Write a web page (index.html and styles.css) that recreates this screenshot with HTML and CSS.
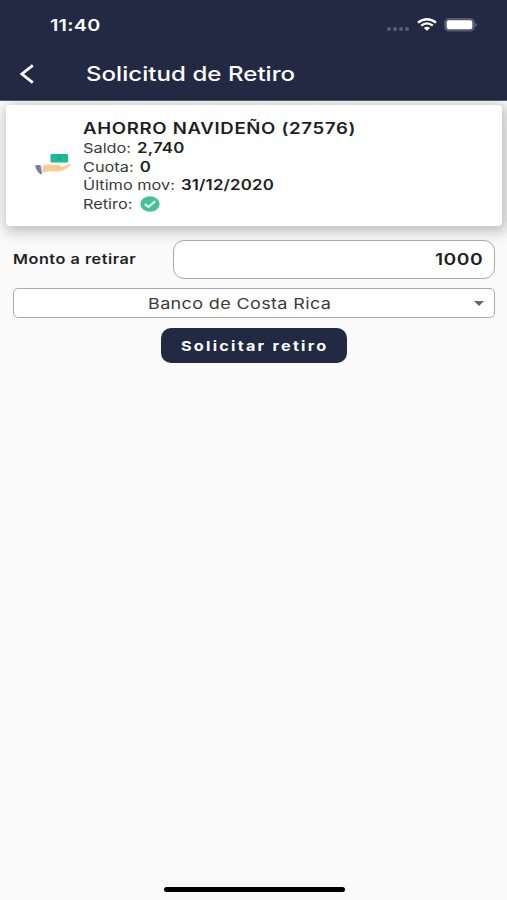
FILE: index.html
```html
<!DOCTYPE html>
<html lang="es">
<head>
    <meta charset="UTF-8">
    <meta name="viewport" content="width=device-width, initial-scale=1.0">
    <title>Solicitud de Retiro</title>
    <link rel="stylesheet" href="styles.css">
</head>
<body>
    <header class="header">
        <div class="status-bar">
            <span class="time wide">11:40</span>
            <div class="status-icons">
                <div class="signal"><i></i><i></i><i></i><i></i></div>
                <svg class="wifi" viewBox="0 0 20 14" preserveAspectRatio="none">
                    <path d="M1 5 Q10 -2.4 19 5" fill="none" stroke="#fff" stroke-width="2.5"/>
                    <path d="M4.2 8.3 Q10 3.4 15.8 8.3" fill="none" stroke="#fff" stroke-width="2.4"/>
                    <path d="M6.9 10.8 Q10 8 13.1 10.8 L10 13.7 Z" fill="#fff"/>
                </svg>
                <svg class="battery" viewBox="0 0 34 14">
                    <rect x=".7" y=".7" width="29.6" height="12.2" rx="4" fill="#545a70" stroke="#545a70" stroke-width="1.2"/>
                    <rect x="2.7" y="2.3" width="25.6" height="9" rx="2.2" fill="#fff"/>
                    <path d="M31.5 4.7 Q34 6.8 31.5 9 Z" fill="#7b7f90"/>
                </svg>
            </div>
        </div>
        <div class="nav-bar">
            <svg class="back" viewBox="0 0 16 20">
                <path d="M13.8 1.3 L2.9 10 L13.8 18.7" fill="none" stroke="#fff" stroke-width="2.8"/>
            </svg>
            <h1 class="wide">Solicitud de Retiro</h1>
        </div>
    </header>

    <main>
        <section class="card">
            <svg class="hand" viewBox="0 0 38 24">
                <rect x="15.5" y="1" width="17.5" height="8.6" rx=".8" fill="#1ebd98"/>
                <rect x="17.2" y="2.4" width="14.1" height="5.8" fill="none" stroke="#19ad8c" stroke-width=".6"/>
                <ellipse cx="24.3" cy="5.3" rx="2.2" ry="1.7" fill="#19a98a"/>
                <path d="M7.2 13.5 C11 11.2 14 11.1 17 11.7 L24.5 12 Q27 12.7 25 14 C29 14.3 32 11.2 35.5 10.7 Q36.7 11.3 34.8 13 C31 16.3 27 18.5 22.5 18.5 L15 18 Q11 18.4 8.3 19.8 Z" fill="#fbcb91"/>
                <path d="M15.5 14.2 Q20 15.4 25.3 14" fill="none" stroke="#f3bf86" stroke-width=".6"/>
                <path d="M0 12.3 L5.5 12 L7.2 20 L5.8 21.4 Q1.2 18.4 0 12.3 Z" fill="#77809a"/>
                <path d="M5.5 12.4 L7.3 12.6 L8.6 19.8 L7.2 20.4 Z" fill="#e3e7ee"/>
            </svg>
            <div class="card-info">
                <h2 class="wide">AHORRO NAVIDEÑO (27576)</h2>
                <p class="row wide">Saldo: <b>2,740</b></p>
                <p class="row wide">Cuota: <b>0</b></p>
                <p class="row wide">Último mov: <b>31/12/2020</b></p>
                <div class="row retiro">
                    <span class="wide">Retiro:</span>
                    <svg class="check" viewBox="0 0 20 16">
                        <ellipse cx="10" cy="8" rx="9.6" ry="7.8" fill="#40c497"/>
                        <path d="M4.9 8.1 L8.4 11 L15.2 5.2" fill="none" stroke="#fff" stroke-width="2.1"/>
                    </svg>
                </div>
            </div>
        </section>

        <form class="form">
            <div class="amount">
                <label class="wide">Monto a retirar</label>
                <div class="amount-box"><span class="wide">1000</span></div>
            </div>
            <div class="bank">
                <span class="wide">Banco de Costa Rica</span>
                <div class="arrow"></div>
            </div>
            <button type="button" class="submit"><span class="wide">Solicitar retiro</span></button>
        </form>
    </main>

    <div class="home-indicator"></div>
</body>
</html>
```
FILE: styles.css
```css
* {
    margin: 0;
    padding: 0;
    box-sizing: border-box;
    font-family: Inter, 'Liberation Sans', sans-serif;
}

body {
    height: 900px;
    display: flex;
    flex-direction: column;
    background: #fafafa;
    color: #1f1f1f;
    overflow: hidden;
}

/* stretched lettering */
.wide {
    display: block;
    width: max-content;
    white-space: nowrap;
    transform: scaleX(1.2);
    transform-origin: left center;
}

.header {
    height: 101px;
    background: #222943;
    color: #fff;
    border-bottom: 1px solid #615b70;
}

.status-bar {
    height: 48px;
    padding: 1px 29px 0 50px;
    display: flex;
    justify-content: space-between;
    align-items: center;
}

.time {
    font-size: 16.5px;
    font-weight: 600;
    letter-spacing: 0.2px;
}

.status-icons {
    display: flex;
    align-items: center;
}

.signal {
    display: flex;
    gap: 2px;
    margin: 9px 8px 0 0;
}

.signal i {
    width: 4px;
    height: 4px;
    border-radius: 50%;
    background: #5a5f75;
}

.wifi {
    width: 20px;
    height: 13px;
    margin-right: 7px;
}

.battery {
    width: 34px;
    height: 14px;
}

.nav-bar {
    height: 52px;
    padding-left: 19px;
    display: flex;
    align-items: center;
}

.back {
    width: 16px;
    height: 20px;
    margin-right: 51px;
}

h1 {
    font-size: 20px;
    font-weight: 500;
    letter-spacing: 0.05px;
}

.card {
    height: 121px;
    margin: 4px 5px 0 6px;
    padding: 14px 0 0 29px;
    display: flex;
    background: #fff;
    border-radius: 4px;
    box-shadow: 2px 3px 14px 3px rgba(0, 0, 0, 0.24);
}

.hand {
    width: 38px;
    height: 24px;
    margin: 34px 10px 0 0;
}

h2 {
    height: 20px;
    font-size: 15.5px;
    font-weight: 600;
    line-height: 20px;
    letter-spacing: 0.56px;
}

.row {
    height: 18.5px;
    font-size: 13.6px;
    line-height: 18.5px;
    color: #3b3b3b;
}

.row b {
    margin-left: 1.2px;
    font-size: 14px;
    font-weight: 600;
    letter-spacing: 0.15px;
    color: #1f1f1f;
}

.retiro {
    display: flex;
    align-items: center;
}

.check {
    width: 20px;
    height: 16px;
    margin-left: 16px;
}

.form {
    padding: 14px 12px 0 13px;
    display: flex;
    flex-direction: column;
    align-items: center;
}

.amount {
    width: 100%;
    display: flex;
    justify-content: space-between;
    align-items: center;
}

.amount label {
    margin-bottom: 1px;
    font-size: 13.5px;
    font-weight: 600;
    letter-spacing: 0.45px;
}

.amount-box {
    width: 322px;
    height: 39px;
    padding: 0 11px 2px 0;
    display: flex;
    justify-content: flex-end;
    align-items: center;
    background: #fff;
    border: 1px solid #aaa;
    border-radius: 11px;
}

.amount-box .wide {
    font-size: 16px;
    font-weight: 600;
    letter-spacing: 0.4px;
    transform-origin: right center;
}

.bank {
    width: 100%;
    height: 30px;
    margin-top: 9px;
    padding: 0 10px 0 134px;
    display: flex;
    justify-content: space-between;
    align-items: center;
    background: #fff;
    border: 1px solid #aaa;
    border-radius: 5px;
    color: #3b3b3b;
    font-size: 15px;
    letter-spacing: 0.3px;
}

.arrow {
    border: 5.5px solid transparent;
    border-top: 5px solid #666;
    border-bottom: 0;
}

.submit {
    width: 186px;
    height: 35px;
    margin-top: 10px;
    padding-left: 20px;
    background: #222943;
    border: 0;
    border-radius: 10px;
    color: #fff;
    font-size: 13.5px;
    font-weight: 700;
}

.submit .wide {
    letter-spacing: 1.87px;
}

.home-indicator {
    width: 181px;
    height: 5px;
    margin: auto auto 8px 164px;
    border-radius: 3px;
    background: #000;
}
```
